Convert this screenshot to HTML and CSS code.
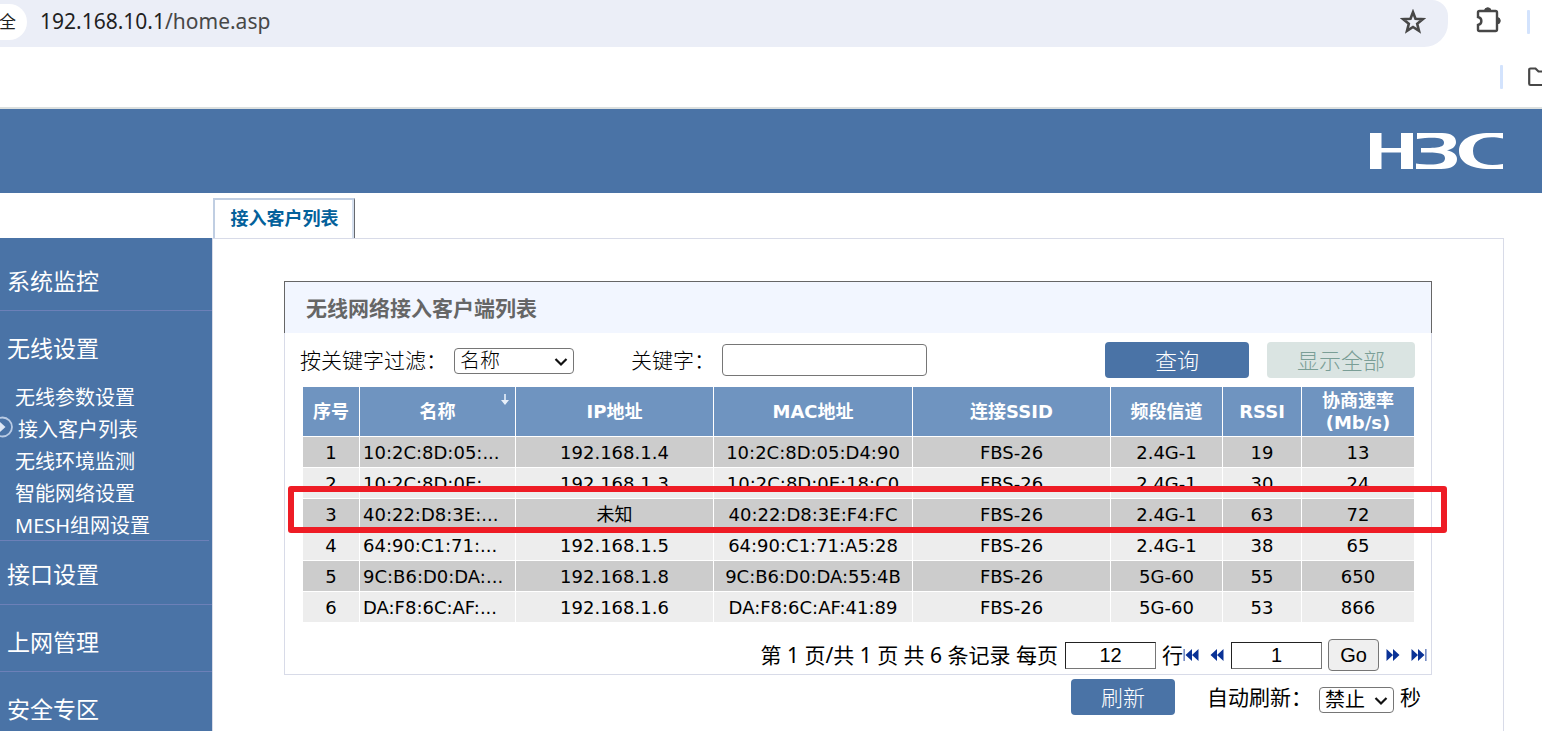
FILE: index.html
```html
<!DOCTYPE html>
<html lang="zh-CN">
<head>
<meta charset="utf-8">
<title>接入客户列表</title>
<link rel="stylesheet" href="styles.css">
</head>
<body>
<div class="toolbar">
  <div class="address">
    <span class="chip">全</span>
    <span class="url"><span class="host">192.168.10.1</span>/home.asp</span>
    <button class="icon-button star" aria-label="收藏">
      <svg width="26" height="26" viewBox="0 0 26 26"><path d="M13 3.200 15.500 9.800 22.800 10.200 17.200 14.800 19 21.900 13 18 7 21.900 8.800 14.800 3.200 10.200 10.500 9.800Z" fill="none" stroke="#474747" stroke-width="2.600"/></svg>
    </button>
  </div>
  <button class="icon-button puzzle" aria-label="扩展程序">
    <svg width="28" height="28" viewBox="0 0 28 28"><path d="M4.500 5H20.500Q22 5 22 6.500V23.500Q22 25 20.500 25H4.500Q3 25 3 23.500V19C7.500 18 7.500 12 3 11V6.500Q3 5 4.500 5Z" fill="none" stroke="#474747" stroke-width="2.400"/><path d="M9.500 5A3.200 3.200 0 0 1 16 5ZM22 11.500A3.200 3.200 0 0 1 22 18Z" fill="#474747" stroke="#474747"/></svg>
  </button>
  <span class="separator"></span>
</div>
<div class="bookmarks">
  <span class="separator"></span>
  <svg class="folder" width="15" height="22" viewBox="0 0 15 22"><path d="M15 5.500H11.500L8.500 2.500H3.500Q2.200 2.500 2.200 3.800V17.700Q2.200 19 3.500 19H15" fill="none" stroke="#474747" stroke-width="2.200"/></svg>
</div>

<header class="banner">
  <svg class="logo" role="img" aria-label="H3C" width="133" height="36" viewBox="0 0 133 36" fill="#fff">
    <path d="M0 0H11.500V15H31V0H43V36H31V19.500H11.500V36H0Z"/>
    <path d="M47 0H72C82 0 86 4 86 9C86 13 83 16 77 17.300C84 19 87 22 87 26C87 32 82 36 71 36H46V30.500C58 32 75 33 75 25.500C75 20 70 19.500 51 19.500V15C70 15 74 14 74 9.500C74 3.500 60 4.500 47 6Z"/>
    <path d="M133 0H120C100 0 89 7 89 18C89 29 100 36 120 36H133V31C115 34 103 30 103 18C103 6 115 2 133 5.500Z"/>
  </svg>
</header>

<div class="layout">
  <nav class="sidebar">
    <section class="menu"><a class="menu-title" href="#">系统监控</a></section>
    <section class="menu open">
      <a class="menu-title" href="#">无线设置</a>
      <ul class="submenu">
        <li><a href="#">无线参数设置</a></li>
        <li class="current">
          <svg class="marker" width="14" height="22" viewBox="0 0 14 22"><circle cx="2.500" cy="11" r="9.500" fill="none" stroke="#b9cbe4" stroke-width="1.800"/><path d="M0 6 5.500 11 0 16Z" fill="#dfe8f5"/></svg>
          <a href="#">接入客户列表</a></li>
        <li><a href="#">无线环境监测</a></li>
        <li><a href="#">智能网络设置</a></li>
        <li><a href="#">MESH组网设置</a></li>
      </ul>
    </section>
    <section class="menu after-open"><a class="menu-title" href="#">接口设置</a></section>
    <section class="menu"><a class="menu-title" href="#">上网管理</a></section>
    <section class="menu last"><a class="menu-title" href="#">安全专区</a></section>
  </nav>

  <div class="page">
    <div class="tabs"><a class="tab" href="#">接入客户列表</a></div>
    <main class="content">
      <section class="panel">
        <h1 class="panel-title">无线网络接入客户端列表</h1>
        <div class="panel-body">
          <form class="filter">
            <label for="field">按关键字过滤：</label>
            <span class="select field-select">
              <select id="field"><option>名称</option></select>
              <svg class="chevron" width="14" height="10" viewBox="0 0 14 10"><path d="M1.500 2 7 7.500 12.500 2" fill="none" stroke="#111" stroke-width="2.200"/></svg>
            </span>
            <label class="keyword-label" for="keyword">关键字：</label>
            <input class="keyword" id="keyword" type="text">
            <button class="button query" type="button">查询</button>
            <button class="button show-all" type="button" disabled>显示全部</button>
          </form>

          <div class="table-wrap">
            <table class="clients">
              <colgroup><col class="c-no"><col class="c-name"><col class="c-ip"><col class="c-mac"><col class="c-ssid"><col class="c-band"><col class="c-rssi"><col class="c-rate"></colgroup>
              <thead>
                <tr><th>序号</th><th class="sorted">名称<svg class="sort" width="10" height="13" viewBox="0 0 10 13"><path d="M4.200 1H5.800V7H9L5 12 1 7H4.200Z" fill="#e8f0fa"/></svg></th><th>IP地址</th><th>MAC地址</th><th>连接SSID</th><th>频段信道</th><th>RSSI</th><th>协商速率<br>(Mb/s)</th></tr>
              </thead>
              <tbody>
                <tr><td>1</td><td>10:2C:8D:05:...</td><td>192.168.1.4</td><td>10:2C:8D:05:D4:90</td><td>FBS-26</td><td>2.4G-1</td><td>19</td><td>13</td></tr>
                <tr><td>2</td><td>10:2C:8D:0E:...</td><td>192.168.1.3</td><td>10:2C:8D:0E:18:C0</td><td>FBS-26</td><td>2.4G-1</td><td>30</td><td>24</td></tr>
                <tr><td>3</td><td>40:22:D8:3E:...</td><td>未知</td><td>40:22:D8:3E:F4:FC</td><td>FBS-26</td><td>2.4G-1</td><td>63</td><td>72</td></tr>
                <tr><td>4</td><td>64:90:C1:71:...</td><td>192.168.1.5</td><td>64:90:C1:71:A5:28</td><td>FBS-26</td><td>2.4G-1</td><td>38</td><td>65</td></tr>
                <tr><td>5</td><td>9C:B6:D0:DA:...</td><td>192.168.1.8</td><td>9C:B6:D0:DA:55:4B</td><td>FBS-26</td><td>5G-60</td><td>55</td><td>650</td></tr>
                <tr><td>6</td><td>DA:F8:6C:AF:...</td><td>192.168.1.6</td><td>DA:F8:6C:AF:41:89</td><td>FBS-26</td><td>5G-60</td><td>53</td><td>866</td></tr>
              </tbody>
            </table>
            <div class="highlight"></div>
          </div>

          <div class="pager">
            <label for="rows">第 1 页/共 1 页 共 6 条记录 每页</label>
            <input class="number" id="rows" type="text" value="12">
            <span class="unit">行</span>
            <a class="nav first" href="#" aria-label="首页"><svg width="16" height="14" viewBox="0 0 16 14" fill="#0a3296"><path d="M0.500 1H1.800V13H0.500Z" opacity=".7"/><path d="M9 1V13L2.500 7ZM15.500 1V13L9 7Z"/></svg></a>
            <a class="nav prev" href="#" aria-label="上一页"><svg width="14" height="14" viewBox="0 0 14 14" fill="#0a3296"><path d="M7 1V13L0.500 7ZM13.500 1V13L7 7Z"/></svg></a>
            <input class="number" type="text" value="1" aria-label="页码">
            <button class="go" type="button">Go</button>
            <a class="nav next" href="#" aria-label="下一页"><svg width="14" height="14" viewBox="0 0 14 14" fill="#0a3296"><path d="M0.500 1V13L7 7ZM7 1V13L13.500 7Z"/></svg></a>
            <a class="nav end" href="#" aria-label="末页"><svg width="16" height="14" viewBox="0 0 16 14" fill="#0a3296"><path d="M14.200 1H15.500V13H14.200Z" opacity=".7"/><path d="M0.500 1V13L7 7ZM7 1V13L13.500 7Z"/></svg></a>
          </div>
        </div>
      </section>
      <div class="refresh">
        <button class="button reload" type="button">刷新</button>
        <label for="auto">自动刷新：</label>
        <span class="select auto-select">
          <select id="auto"><option>禁止</option></select>
          <svg class="chevron" width="14" height="10" viewBox="0 0 14 10"><path d="M1.500 2 7 7.500 12.500 2" fill="none" stroke="#111" stroke-width="2.200"/></svg>
        </span>
        <span>秒</span>
      </div>
    </main>
  </div>
</div>
</body>
</html>
```

FILE: styles.css
```css
* { box-sizing: border-box; }

body {
  margin: 0;
  min-height: 100vh;
  display: flex;
  flex-direction: column;
  background: #fff;
  color: #000;
  font: 21px/28px "Noto Sans", "Noto Sans CJK SC", sans-serif;
}

a { color: inherit; text-decoration: none; }
button, input, select { font: inherit; margin: 0; }

/* Browser bars */
.toolbar {
  display: flex;
  align-items: flex-start;
  height: 47px;
  padding-right: 12px;
}
.address {
  flex: 1;
  display: flex;
  align-items: flex-start;
  height: 47px;
  padding: 4px 22px 0 0;
  background: #ebeef7;
  border-radius: 0 16px 24px 0;
}
.chip {
  display: flex;
  justify-content: flex-end;
  align-items: center;
  width: 27px;
  height: 36px;
  padding-right: 11px;
  border-radius: 0 18px 18px 0;
  background: #fff;
  color: #1f1f1f;
  font-size: 17px;
}
.url {
  flex: 1;
  padding-left: 13px;
  line-height: 34px;
  font-size: 21px;
  color: #474747;
}
.host { color: #1f1f1f; }
.icon-button {
  display: flex;
  padding: 0;
  border: 0;
  background: none;
}
.star { margin-top: 5px; }
.puzzle { margin: 6px 24px 0 27px; }
.separator {
  width: 3px;
  height: 24px;
  border-radius: 1px;
  background: #d3e3fd;
}
.toolbar .separator { margin-top: 10px; }
.bookmarks {
  display: flex;
  justify-content: flex-end;
  align-items: center;
  gap: 24px;
  height: 62px;
  border-bottom: 2px solid #dce0df;
}

/* Product banner */
.banner {
  display: flex;
  justify-content: flex-end;
  align-items: center;
  height: 84px;
  padding-right: 39px;
  background: #4a73a6;
}

.layout { flex: 1; display: flex; }

/* Sidebar */
.sidebar {
  width: 212px;
  margin-top: 45px;
  padding-top: 6px;
  background: #4a73a6;
  color: #fff;
}
.menu { padding: 21px 0 13px; border-bottom: 1px solid #6c80b8; }
.menu-title {
  display: block;
  padding-left: 7px;
  font-size: 23px;
  line-height: 32px;
}
.menu.open { margin-right: 3px; padding-bottom: 0; }
.menu.after-open { padding: 17px 0 14px; }
.menu.last { padding-bottom: 0; border-bottom: 0; }
.submenu {
  margin: 0;
  padding: 18px 0 0 15px;
  list-style: none;
  font-size: 20px;
  line-height: 32px;
}
.submenu li { height: 32px; }
.submenu li:last-child { height: 30px; }
.submenu .current { position: relative; padding-left: 3px; }
.marker { position: absolute; left: -15px; top: 2px; }

/* Page area */
.page {
  flex: 1;
  display: flex;
  flex-direction: column;
  padding: 5px 38px 0 0;
}
.tabs { display: flex; height: 40px; padding-left: 1px; }
.tab {
  width: 142px;
  border: 2px solid #c0cee2;
  border-bottom: 0;
  border-right: 1px solid #66696e;
  box-shadow: inset -2px 0 #d5dfee;
  color: #03619b;
  font-size: 18px;
  font-weight: bold;
  line-height: 36px;
  text-align: center;
}
.content {
  flex: 1;
  padding: 42px 71px 0;
  border: 1px solid #d8dbe8;
  border-bottom: 0;
}

/* Client panel */
.panel-title {
  height: 52px;
  margin: 0;
  padding-left: 21px;
  border: 1px solid #666;
  border-bottom: 0;
  background: #f2f6ff;
  color: #666;
  font-size: 21px;
  line-height: 53px;
}
.panel-body { border: 1px solid #d8dbe8; border-top: 0; }
.filter {
  display: flex;
  align-items: center;
  height: 54px;
  padding: 0 16px 0 15px;
  font-weight: 300;
}
.select { position: relative; display: flex; height: 26px; }
.select select {
  appearance: none;
  width: 100%;
  padding: 0 5px;
  border: 1px solid #767676;
  border-radius: 4px;
  background: #fff;
  color: #000;
  font-size: 20px;
  line-height: 24px;
}
.chevron { position: absolute; right: 6px; top: 9px; pointer-events: none; }
.field-select { width: 120px; margin: 2px 0 0 7px; }
.keyword-label { margin-left: 57px; }
.keyword {
  width: 205px;
  height: 32px;
  margin-left: 7px;
  border: 1px solid #767676;
  border-radius: 4px;
}
.button {
  height: 36px;
  padding: 0;
  border: 0;
  border-radius: 4px;
  background: #4a73a6;
  color: #fff;
  font-size: 22px;
  font-weight: 300;
  line-height: 36px;
}
.query { width: 144px; margin-left: auto; }
.show-all {
  width: 148px;
  margin-left: 18px;
  background: #dae4e2;
  color: #7a9e96;
}

.table-wrap { position: relative; margin: 0 17px 0 18px; }
.clients {
  width: 100%;
  table-layout: fixed;
  border-collapse: separate;
  border-spacing: 0;
  font: 18px/22px "DejaVu Sans", "Noto Sans CJK SC", sans-serif;
  text-align: center;
}
.c-no { width: 57px; }
.c-name { width: 156px; }
.c-ip, .c-ssid { width: 198px; }
.c-mac { width: 199px; }
.c-band, .c-rate { width: 112px; }
.c-rssi { width: 79px; }
.clients th, .clients td {
  padding: 0;
  border: solid #fff;
  border-width: 0 1px 1px 0;
  white-space: nowrap;
}
.clients th:last-child, .clients td:last-child { border-right: 0; }
.clients th { height: 50px; background: #6f94c0; color: #fff; }
.clients td { height: 31px; padding-top: 2px; background: #ededed; }
.clients tr:nth-child(odd) td { background: #ccc; }
.clients td:nth-child(2) { padding-left: 3px; text-align: left; }
.sorted { position: relative; }
.sort { position: absolute; right: 5px; top: 6px; }
.highlight {
  position: absolute;
  left: -15px;
  right: -33px;
  top: 99px;
  height: 47px;
  border: 6px solid #ee1c25;
  border-radius: 3px;
}

.pager {
  display: flex;
  justify-content: flex-end;
  align-items: center;
  height: 51px;
  padding: 13px 4px 0 0;
}
.number {
  width: 91px;
  height: 27px;
  padding: 0;
  border: 1px solid #767676;
  border-top-color: #222;
  border-left-color: #222;
  font: 20px "Liberation Sans", sans-serif;
  text-align: center;
}
.pager label { margin-right: 7px; }
.unit { margin-left: 6px; }
.nav { display: flex; }
.prev { margin: 0 7px 0 11px; }
.go {
  width: 51px;
  height: 32px;
  margin: 0 7px 0 6px;
  padding: 0;
  border: 1px solid #767676;
  border-radius: 4px;
  background: #efefef;
  color: #000;
  font: 20px "Liberation Sans", sans-serif;
}
.end { margin-left: 11px; }

.refresh {
  display: flex;
  justify-content: flex-end;
  align-items: center;
  padding: 4px 11px 0 0;
  line-height: 30px;
}
.reload { width: 104px; margin-right: 32px; }
.auto-select { width: 75px; margin: 6px 6px 0 7px; }
```
